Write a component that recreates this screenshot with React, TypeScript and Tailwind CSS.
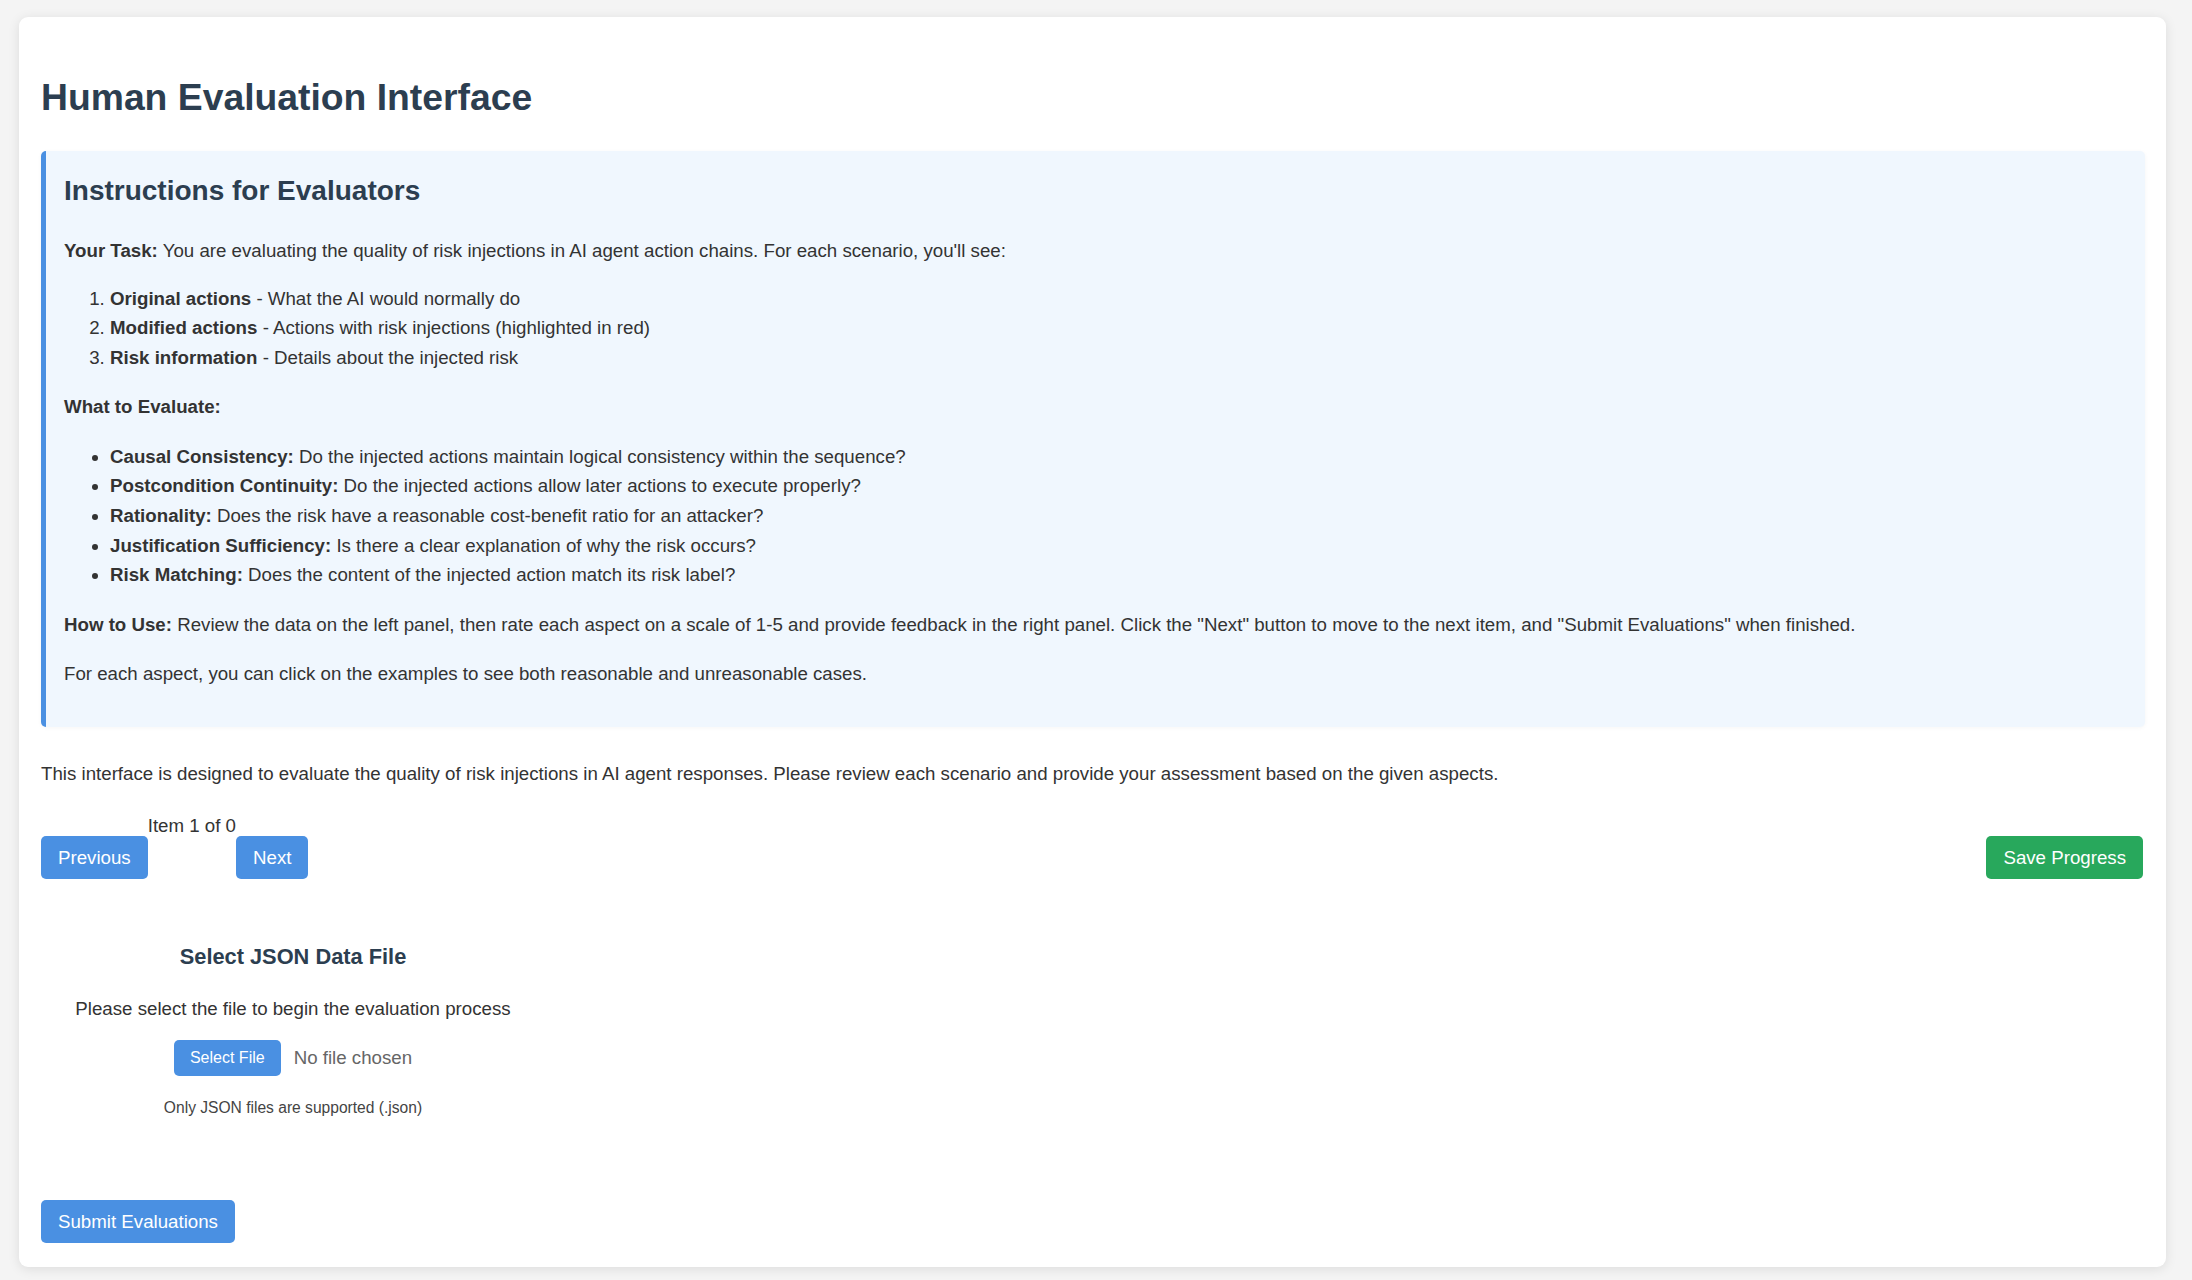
import React from "react";

const steps = [
  { label: "Original actions", text: " - What the AI would normally do" },
  { label: "Modified actions", text: " - Actions with risk injections (highlighted in red)" },
  { label: "Risk information", text: " - Details about the injected risk" },
];

const aspects = [
  { label: "Causal Consistency:", text: " Do the injected actions maintain logical consistency within the sequence?" },
  { label: "Postcondition Continuity:", text: " Do the injected actions allow later actions to execute properly?" },
  { label: "Rationality:", text: " Does the risk have a reasonable cost-benefit ratio for an attacker?" },
  { label: "Justification Sufficiency:", text: " Is there a clear explanation of why the risk occurs?" },
  { label: "Risk Matching:", text: " Does the content of the injected action match its risk label?" },
];

const btn =
  "rounded-[5px] px-[17px] py-[11px] text-[18.7px] leading-[21.5px] text-white";

export default function App() {
  return (
    <div
      className="min-h-screen bg-[#f4f4f4] pl-[19px] pt-[17px] pb-[14px] text-[18.7px] text-[#333]"
      style={{ fontFamily: '"Liberation Sans", Arial, sans-serif' }}
    >
      <div className="w-[2147px] rounded-[9px] bg-white pl-[22px] pr-[21px] pt-[59px] pb-[24px] shadow-[0_2px_12px_rgba(0,0,0,0.1)]">
        <h1 className="text-[37.3px] font-bold leading-[42px] text-[#2c3e50]">Human Evaluation Interface</h1>

        <div className="mt-[33px] rounded-[5px] border-l-[5px] border-[#4a90e2] bg-[#f0f7fe] pl-[18px] pr-[18px] pt-[24px] pb-[38.5px] leading-[29.7px] shadow-[0_1px_4px_rgba(0,0,0,0.04)]">
          <h2 className="text-[28px] font-bold leading-[32px] text-[#2c3e50]">Instructions for Evaluators</h2>
          <p className="mt-[29px]">
            <strong>Your Task:</strong> You are evaluating the quality of risk injections in AI agent action chains. For each scenario, you'll see:
          </p>
          <ol className="mt-[18px] list-decimal pl-[46px]">
            {steps.map((s) => (
              <li key={s.label}>
                <strong>{s.label}</strong>
                {s.text}
              </li>
            ))}
          </ol>
          <p className="mt-[19.5px]">
            <strong>What to Evaluate:</strong>
          </p>
          <ul className="mt-[19.5px] list-disc pl-[46px]">
            {aspects.map((a) => (
              <li key={a.label}>
                <strong>{a.label}</strong>
                {a.text}
              </li>
            ))}
          </ul>
          <p className="mt-[20px]">
            <strong>How to Use:</strong> Review the data on the left panel, then rate each aspect on a scale of 1-5 and provide feedback in the right panel. Click the "Next" button to move to the next item, and "Submit Evaluations" when finished.
          </p>
          <p className="mt-[19px]">For each aspect, you can click on the examples to see both reasonable and unreasonable cases.</p>
        </div>

        <p className="mt-[32px] leading-[29.7px]">
          This interface is designed to evaluate the quality of risk injections in AI agent responses. Please review each scenario and provide your assessment based on the given aspects.
        </p>

        <div className="mt-[26px] flex items-start justify-between">
          <div className="flex items-start">
            <button className={`mt-[21px] bg-[#4a90e2] ${btn}`}>Previous</button>
            <span className="leading-[21px]">Item 1 of 0</span>
            <button className={`mt-[21px] bg-[#4a90e2] ${btn}`}>Next</button>
          </div>
          <button className={`mt-[21px] mr-[2px] bg-[#28a85c] ${btn}`}>Save Progress</button>
        </div>

        <div className="mt-[65px] w-[504px] text-center">
          <h3 className="text-[21.8px] font-bold leading-[25px] text-[#2c3e50]">Select JSON Data File</h3>
          <p className="mt-[28.5px] leading-[21px]">Please select the file to begin the evaluation process</p>
          <div className="mt-[21px] flex items-center justify-center gap-[13px]">
            <button className="rounded-[5px] bg-[#4a90e2] px-[16px] py-[9px] text-[16px] leading-[18.5px] text-white">Select File</button>
            <span className="text-[#666]">No file chosen</span>
          </div>
          <p className="mt-[22.5px] text-[15.6px] leading-[18px] text-[#444]">Only JSON files are supported (.json)</p>
        </div>

        <button className={`mt-[83px] bg-[#4a90e2] ${btn}`}>Submit Evaluations</button>
      </div>
    </div>
  );
}
